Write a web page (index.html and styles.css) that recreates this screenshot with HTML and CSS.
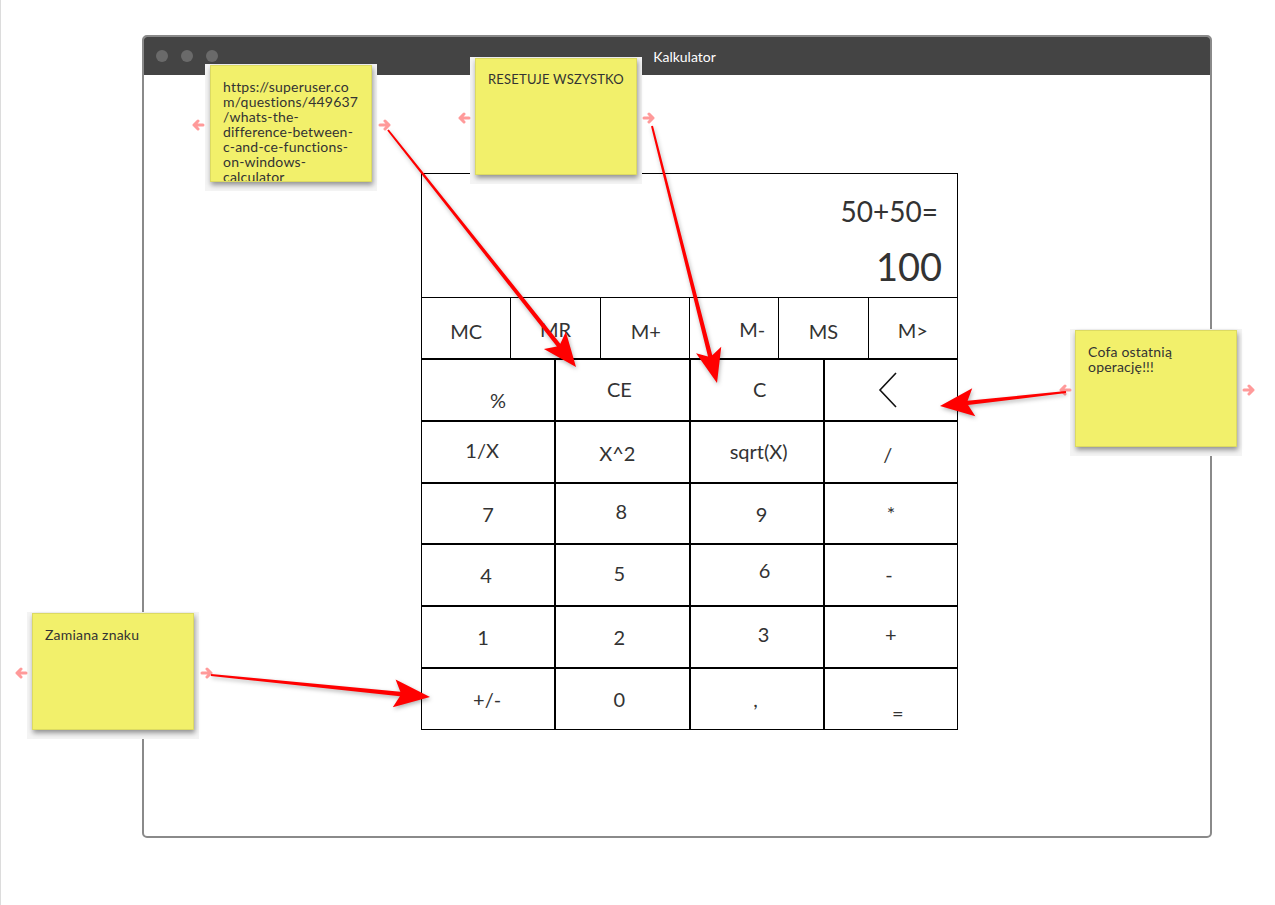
FILE: index.html
```html
<!DOCTYPE html>
<html lang="pl">
<head>
<meta charset="utf-8">
<title>Kalkulator</title>
<link rel="stylesheet" href="styles.css">
</head>
<body>
<div class="page">
  <div class="window">
    <div class="titlebar">
      <div class="dots"><span></span><span></span><span></span></div>
      <div class="title">Kalkulator</div>
      <div></div>
    </div>
    <div class="content">
      <div class="calc">
        <div class="display">
          <div class="expr">50+50=</div>
          <div class="result">100</div>
        </div>
        <div class="mem">
          <div class="mkey"><span class="k-mc">MC</span></div>
          <div class="mkey"><span class="k-mr">MR</span></div>
          <div class="mkey"><span class="k-mplus">M+</span></div>
          <div class="mkey"><span class="k-mminus">M-</span></div>
          <div class="mkey"><span class="k-ms">MS</span></div>
          <div class="mkey"><span class="k-mlist">M&gt;</span></div>
        </div>
        <div class="keys">
          <div class="key"><span class="k-pct">%</span></div>
          <div class="key"><span class="k-ce">CE</span></div>
          <div class="key"><span class="k-c">C</span></div>
          <div class="key"><svg class="k-back" width="20" height="36" viewBox="0 0 20 36"><polyline points="18,1 2,18 18,35"/></svg></div>

          <div class="key"><span class="k-inv">1/X</span></div>
          <div class="key"><span class="k-sq">X^2</span></div>
          <div class="key"><span class="k-sqrt">sqrt(X)</span></div>
          <div class="key"><span class="k-div">/</span></div>

          <div class="key"><span class="k-7">7</span></div>
          <div class="key"><span class="k-8">8</span></div>
          <div class="key"><span class="k-9">9</span></div>
          <div class="key"><span class="k-mul">*</span></div>

          <div class="key"><span class="k-4">4</span></div>
          <div class="key"><span class="k-5">5</span></div>
          <div class="key"><span class="k-6">6</span></div>
          <div class="key"><span class="k-sub">-</span></div>

          <div class="key"><span class="k-1">1</span></div>
          <div class="key"><span class="k-2">2</span></div>
          <div class="key"><span class="k-3">3</span></div>
          <div class="key"><span class="k-add">+</span></div>

          <div class="key"><span class="k-neg">+/-</span></div>
          <div class="key"><span class="k-0">0</span></div>
          <div class="key"><span class="k-comma">,</span></div>
          <div class="key"><span class="k-eq">=</span></div>
        </div>
      </div>
    </div>
  </div>

  <div class="note note-url"><p>https://superuser.co<br>m/questions/449637<br>/whats-the-<br>difference-between-<br>c-and-ce-functions-<br>on-windows-<br>calculator</p></div>
  <div class="note note-reset"><p>RESETUJE WSZYSTKO</p></div>
  <div class="note note-undo"><p>Cofa ostatnią<br>operację!!!</p></div>
  <div class="note note-sign"><p>Zamiana znaku</p></div>

  <svg class="handle h-url-l" viewBox="0 0 14 12"><path d="M12 6H3M7 2L3 6l4 4"/></svg>
  <svg class="handle h-url-r" viewBox="0 0 14 12"><path d="M2 6h9M7 2l4 4-4 4"/></svg>
  <svg class="handle h-reset-l" viewBox="0 0 14 12"><path d="M12 6H3M7 2L3 6l4 4"/></svg>
  <svg class="handle h-reset-r" viewBox="0 0 14 12"><path d="M2 6h9M7 2l4 4-4 4"/></svg>
  <svg class="handle h-undo-l" viewBox="0 0 14 12"><path d="M12 6H3M7 2L3 6l4 4"/></svg>
  <svg class="handle h-undo-r" viewBox="0 0 14 12"><path d="M2 6h9M7 2l4 4-4 4"/></svg>
  <svg class="handle h-sign-l" viewBox="0 0 14 12"><path d="M12 6H3M7 2L3 6l4 4"/></svg>
  <svg class="handle h-sign-r" viewBox="0 0 14 12"><path d="M2 6h9M7 2l4 4-4 4"/></svg>

  <svg class="arrows" width="1275" height="905" viewBox="0 0 1275 905">
    <polygon points="387.22,130.62 556.88,346.43 543.90,349.06 576,367 565.84,331.66 560.32,343.69 388.78,129.38"/>
    <polygon points="651.03,126.25 708.00,356.40 696.06,353.23 717,383 721.26,346.85 712.26,355.32 652.97,125.75"/>
    <polygon points="1065.89,391.01 967.59,400.72 972.24,388.34 940,406 975.34,416.16 968.07,405.10 1066.11,392.99"/>
    <polygon points="210.90,676.00 399.93,696.19 392.78,707.33 430,697 395.58,679.47 400.37,691.81 211.10,674.00"/>
  </svg>
</div>
</body>
</html>
```

FILE: styles.css
```css
html, body {
  margin: 0;
  background: #fff;
}

body {
  font-family: Lato, "Liberation Sans", sans-serif;
}

.page {
  position: relative;
  height: 905px;
  border-left: 1px solid #dcdcdc;
  overflow: hidden;
}

/* ---------- window ---------- */
.window {
  margin: 35px 0 0 141px;
  width: 1070px;
  height: 803px;
  box-sizing: border-box;
  border: 2px solid #8a8a8a;
  border-radius: 5px;
  background: #fff;
  display: flex;
  flex-direction: column;
  overflow: hidden;
}

.titlebar {
  height: 38px;
  flex: none;
  background: #444;
  display: grid;
  grid-template-columns: 1fr auto 1fr;
  align-items: center;
}

.dots {
  display: flex;
  gap: 13px;
  padding-left: 12px;
}

.dots span {
  width: 12px;
  height: 12px;
  border-radius: 50%;
  background: #6a6a6a;
}

.title {
  color: #fff;
  font-size: 14px;
  padding-left: 15px;
}

.content {
  flex: 1;
  padding: 98px 0 0 277px;
}

/* ---------- calculator ---------- */
.calc {
  width: 537px;
  height: 557px;
  box-sizing: border-box;
  border: 1px solid #000;
  display: flex;
  flex-direction: column;
  background: #fff;
  color: #333;
}

.display {
  height: 123px;
  flex: none;
  box-sizing: border-box;
  padding-top: 21px;
  text-align: right;
}

.expr {
  font-size: 28px;
  line-height: 1.2;
  padding-right: 19px;
}

.result {
  font-size: 38px;
  line-height: 1.2;
  margin-top: 15px;
  padding-right: 15px;
}

.mem {
  height: 61px;
  flex: none;
  box-sizing: border-box;
  border-top: 1px solid #000;
  display: flex;
}

.mkey {
  flex: 1;
  display: flex;
  align-items: center;
  justify-content: center;
  font-size: 20px;
}

.mkey + .mkey {
  border-left: 1px solid #000;
}

.keys {
  flex: 1;
  border-top: 2px solid #000;
  display: grid;
  grid-template-columns: repeat(4, 1fr);
  grid-template-rows: repeat(6, 1fr);
  gap: 2px;
  background: #000;
}

.key {
  background: #fff;
  display: flex;
  align-items: center;
  justify-content: center;
  font-size: 20px;
}

.key span, .mkey span {
  display: block;
}

.k-back polyline {
  fill: none;
  stroke: #111;
  stroke-width: 1.6;
}

/* label nudges (wireframe labels are not perfectly centred) */
.k-mc { transform: translate(0, 3px); }
.k-mr { transform: translate(0, 1px); }
.k-mplus { transform: translate(1px, 3px); }
.k-mminus { transform: translate(18px, 1px); }
.k-ms { transform: translate(0, 3px); }
.k-mlist { transform: translate(0, 2px); }

.k-pct { transform: translate(10px, 10px); }
.k-ce { transform: translate(-3px, -1px); }
.k-c { transform: translate(3px, -1px); }
.k-back { transform: translate(-3px, 0); }

.k-inv { transform: translate(-6px, -2px); }
.k-sq { transform: translate(-5px, 1px); }
.k-sqrt { transform: translate(2px, -1px); }
.k-div { transform: translate(-3px, 2px); }

.k-7 { transform: translate(0, 0); }
.k-8 { transform: translate(-1px, -3px); }
.k-9 { transform: translate(5px, 0); }
.k-mul { transform: translate(0, -1px); }

.k-4 { transform: translate(-2px, 0); }
.k-5 { transform: translate(-3px, -2px); }
.k-6 { transform: translate(8px, -5px); }
.k-sub { transform: translate(-2px, -1px); }

.k-1 { transform: translate(-5px, 0); }
.k-2 { transform: translate(-3px, 0); }
.k-3 { transform: translate(7px, -3px); }
.k-add { transform: translate(0, -3px); }

.k-neg { transform: translate(-1px, 0); }
.k-0 { transform: translate(-3px, 0); }
.k-comma { transform: translate(-1px, 0); }
.k-eq { transform: translate(7px, 14px); }

/* ---------- sticky notes ---------- */
.note {
  position: absolute;
  width: 162px;
  height: 117px;
  box-sizing: border-box;
  padding: 13px 12px 0;
  background: #f2f06b;
  border: 1px solid #dcda62;
  box-shadow: 1px 3px 5px rgba(0, 0, 0, 0.4), 0 4px 0 5px #f4f4f4;
  overflow: hidden;
  color: #333;
  font-size: 14px;
  letter-spacing: 0.2px;
  line-height: 15px;
  white-space: nowrap;
}

.note p {
  margin: 0;
}

.note-url { left: 209px; top: 65px; }
.note-reset { left: 474px; top: 58px; font-size: 13px; letter-spacing: 0.2px; }
.note-undo { left: 1074px; top: 330px; }
.note-sign { left: 31px; top: 613px; }

.handle {
  position: absolute;
  width: 14px;
  height: 12px;
  fill: none;
  stroke: #ff9a9a;
  stroke-width: 3;
  stroke-linecap: round;
  stroke-linejoin: round;
}

.h-url-l { left: 190px; top: 119px; }
.h-url-r { left: 377px; top: 119px; }
.h-reset-l { left: 456px; top: 112px; }
.h-reset-r { left: 641px; top: 112px; }
.h-undo-l { left: 1057px; top: 384px; }
.h-undo-r { left: 1241px; top: 384px; }
.h-sign-l { left: 13px; top: 667px; }
.h-sign-r { left: 199px; top: 667px; }

/* ---------- annotation arrows ---------- */
.arrows {
  position: absolute;
  left: -1px;
  top: 0;
  pointer-events: none;
  filter: drop-shadow(1px 2px 2px rgba(0, 0, 0, 0.3));
}

.arrows polygon {
  fill: #ff0000;
}
```
